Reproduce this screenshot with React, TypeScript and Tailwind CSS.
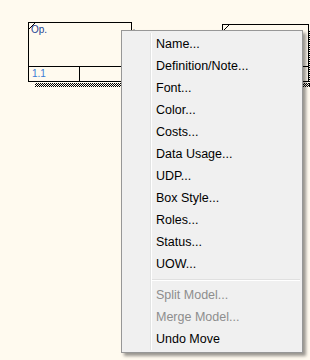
const items = [
  "Name...",
  "Definition/Note...",
  "Font...",
  "Color...",
  "Costs...",
  "Data Usage...",
  "UDP...",
  "Box Style...",
  "Roles...",
  "Status...",
  "UOW...",
];

const hatch =
  "bg-[repeating-conic-gradient(#000_0_25%,transparent_0_50%)] bg-[length:2px_2px]";

function Corner() {
  return (
    <svg className="absolute left-0 top-0" width="7" height="7" viewBox="0 0 7 7">
      <path d="M0 6 L6 0" stroke="#000" strokeWidth="1" />
    </svg>
  );
}

export default function App() {
  return (
    <div
      className="relative w-[310px] h-[360px] overflow-hidden bg-[#fffaef]"
      style={{ fontFamily: '"Liberation Sans", Arial, sans-serif' }}
    >
      {/* activity box 1 */}
      <div className="absolute left-[28px] top-[22px] w-[104px] h-[60px] border-[1.5px] border-black flex flex-col">
        <Corner />
        <div className="flex-1 pl-[2px] pt-[1px] text-[10px] leading-[12px] text-[#1c3f94]">Op.</div>
        <div className="h-[15px] border-t-[1.5px] border-black flex">
          <div className="w-[51px] border-r-[1.5px] border-black pl-[3px] text-[10px] leading-[13px] text-[#3b7bd6]">1.1</div>
          <div className="flex-1" />
        </div>
      </div>
      <div className={`absolute left-[35px] top-[83px] w-[100px] h-[4px] ${hatch}`} />
      <div className="absolute left-[133px] top-[27px] text-[7px] leading-none text-black">:</div>

      {/* activity box 2 */}
      <div className="absolute left-[222px] top-[24px] w-[87px] h-[58px] border-[1.5px] border-black">
        <Corner />
        <div className="absolute left-0 right-0 top-[41px] border-t-[1.5px] border-black" />
      </div>
      <div className={`absolute left-[309px] top-[30px] w-[2px] h-[56px] ${hatch}`} />
      <div className={`absolute left-[229px] top-[83px] w-[82px] h-[4px] ${hatch}`} />

      {/* context menu */}
      <div className="absolute left-[121px] top-[30px] w-[182px] border border-[#979797] bg-[#f0f0f0] py-[2px] shadow-[3px_3px_3px_rgba(0,0,0,0.4)]">
        <div className="absolute left-[28px] top-[2px] bottom-[2px] w-px bg-[#e2e3e3] border-r border-white box-content" />
        {items.map((t) => (
          <div key={t} className="h-[22px] pl-[34px] flex items-center text-[12.5px] text-black">
            {t}
          </div>
        ))}
        <div className="h-[9px] flex items-center pl-[30px] pr-[2px]">
          <div className="w-full h-px bg-[#e0e0e0] border-b border-white box-content" />
        </div>
        <div className="h-[22px] pl-[34px] flex items-center text-[12.5px] text-[#8d8d8d]">Split Model...</div>
        <div className="h-[22px] pl-[34px] flex items-center text-[12.5px] text-[#8d8d8d]">Merge Model...</div>
        <div className="h-[22px] pl-[34px] flex items-center text-[12.5px] text-black">Undo Move</div>
      </div>
    </div>
  );
}
